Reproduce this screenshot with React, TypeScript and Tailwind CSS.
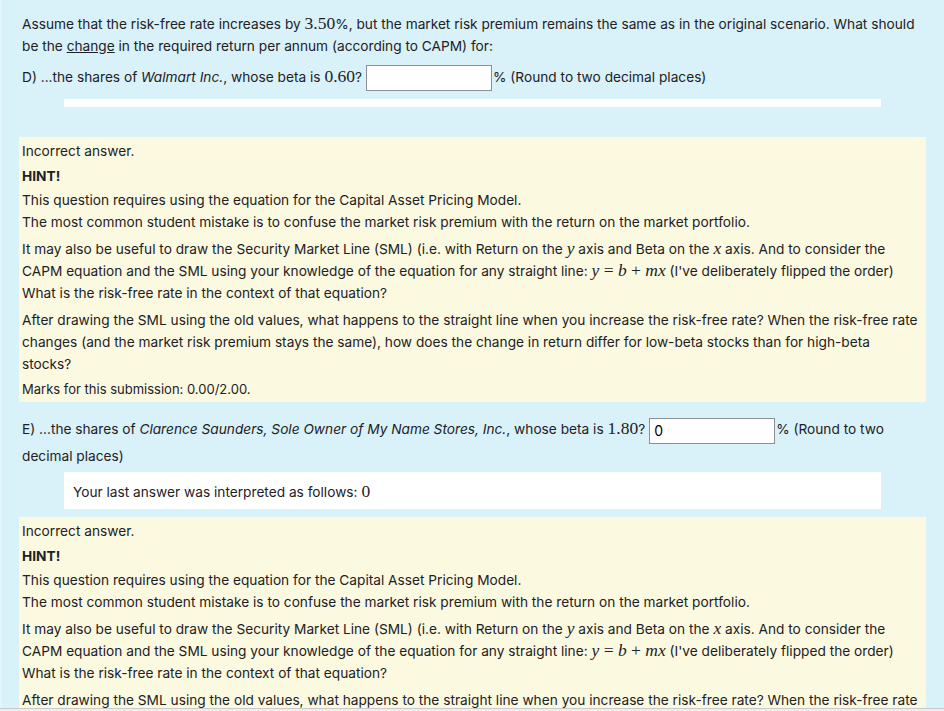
import React from "react";

const sans = { fontFamily: "Inter, 'Noto Sans', 'Liberation Sans', sans-serif" };

function M({ children, italic = false }: { children: React.ReactNode; italic?: boolean }) {
  return (
    <span className={`font-['Liberation_Serif',serif] text-[17.5px] leading-[20px] ${italic ? "italic" : ""}`}>
      {children}
    </span>
  );
}

function AnswerInput({ value = "" }: { value?: string }) {
  return (
    <span className="ml-[4px] mr-[1px] inline-block h-[26px] w-[126px] border border-[#8b9097] bg-white px-[4px] align-middle text-[14px] leading-[24px] text-black">
      {value}
    </span>
  );
}

function Feedback() {
  return (
    <div className="bg-[#fbf9e0] px-[3px] pb-[2px] pt-[3px]">
      <p>Incorrect answer.</p>
      <p className="mt-[3px] font-bold">HINT!</p>
      <p className="mt-[2px]">
        This question requires using the equation for the Capital Asset Pricing Model.
        <br />
        The most common student mistake is to confuse the market risk premium with the return on the market portfolio.
      </p>
      <p className="mt-[5px]">
        It may also be useful to draw the Security Market Line (SML) (i.e. with Return on the <M italic>y</M> axis and Beta on
        the <M italic>x</M> axis. And to consider the CAPM equation and the SML using your knowledge of the equation for any
        straight line:{" "}
        <M>
          <i>y</i> = <i>b</i> + <i>mx</i>
        </M>{" "}
        (I've deliberately flipped the order)
        <br />
        What is the risk-free rate in the context of that equation?
      </p>
      <p className="mt-[5px]">
        After drawing the SML using the old values, what happens to the straight line when you increase the risk-free rate?
        When the risk-free rate changes (and the market risk premium stays the same), how does the change in return differ
        for low-beta stocks than for high-beta stocks?
      </p>
      <p className="mt-[3px] text-[13px]">Marks for this submission: 0.00/2.00.</p>
    </div>
  );
}

export default function App() {
  return (
    <div
      style={sans}
      className="min-h-screen border-l-2 border-[#e4f5fa] bg-[#d9f1f9] pl-[17px] pr-[18px] pt-[13px] text-[13.7px] leading-[22px] text-[#1d2125]"
    >
      <div className="px-[3px]">
        <p>
          Assume that the risk-free rate increases by <M>3.50</M>%, but the market risk premium remains the same as in the
          original scenario. What should be the <span className="underline">change</span> in the required return per annum
          (according to CAPM) for:
        </p>
        <p className="mt-[7px] leading-[26px]">
          D) ...the shares of <i>Walmart Inc.</i>, whose beta is <M>0.60</M>?
          <AnswerInput />% (Round to two decimal places)
        </p>
      </div>
      <div className="ml-[45px] mt-[8px] h-[8px] w-[817px] bg-white" />

      <div className="mt-[30px]">
        <Feedback />
      </div>

      <div className="mt-[15px] px-[3px]">
        <p className="leading-[24px]">
          E) ...the shares of <i>Clarence Saunders, Sole Owner of My Name Stores, Inc.</i>, whose beta is <M>1.80</M>?
          <AnswerInput value="0" />% (Round to two decimal places)
        </p>
      </div>
      <div className="ml-[45px] mt-[4px] w-[817px] bg-white px-[9px] pb-[6px] pt-[9px]">
        Your last answer was interpreted as follows: <M>0</M>
      </div>

      <div className="mt-[8px]">
        <Feedback />
      </div>
      <div className="h-[40px]" />
      <div className="fixed inset-x-0 bottom-0 h-[3px] border-t border-[#c9c9c9] bg-[#eeeeee]" />
    </div>
  );
}
